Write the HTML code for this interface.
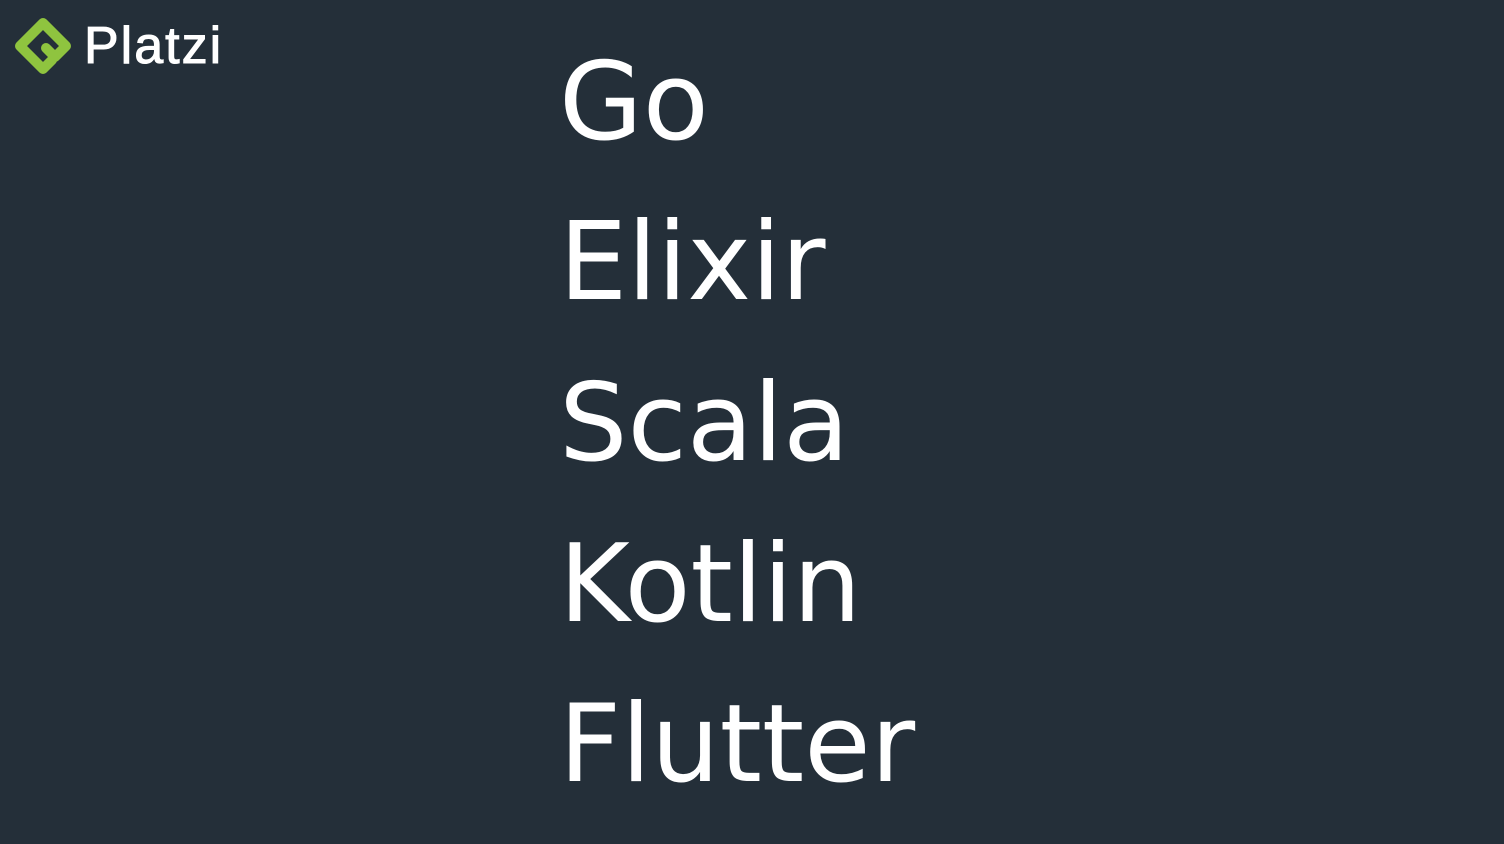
<!DOCTYPE html>
<html><head><style>
html,body{margin:0;padding:0;}
body{width:1504px;height:844px;background:#242f39;overflow:hidden;position:relative;font-family:"DejaVu Sans",sans-serif;}
.w{position:absolute;left:559px;color:#fff;font-size:108px;line-height:1;letter-spacing:0px;}
.logo{position:absolute;left:84px;top:16px;color:#fff;font-size:52px;letter-spacing:2px;-webkit-text-stroke:1px #fff;font-family:"Liberation Sans",sans-serif;}
</style></head><body>
<svg style="position:absolute;left:10px;top:8px" width="66" height="70" viewBox="0 0 66 70">
<path d="M42 52 L33 61 L10 38 L33 15 L56 38 L45 49 L36 40" fill="none" stroke="#8fc43f" stroke-width="10" stroke-linejoin="round" stroke-linecap="round"/>
</svg>
<div class="logo">Platzi</div>
<div class="w" style="top:49px">Go</div>
<div class="w" style="top:209px">Elixir</div>
<div class="w" style="top:370px">Scala</div>
<div class="w" style="top:531px">Kotlin</div>
<div class="w" style="top:691px">Flutter</div>
</body></html>
